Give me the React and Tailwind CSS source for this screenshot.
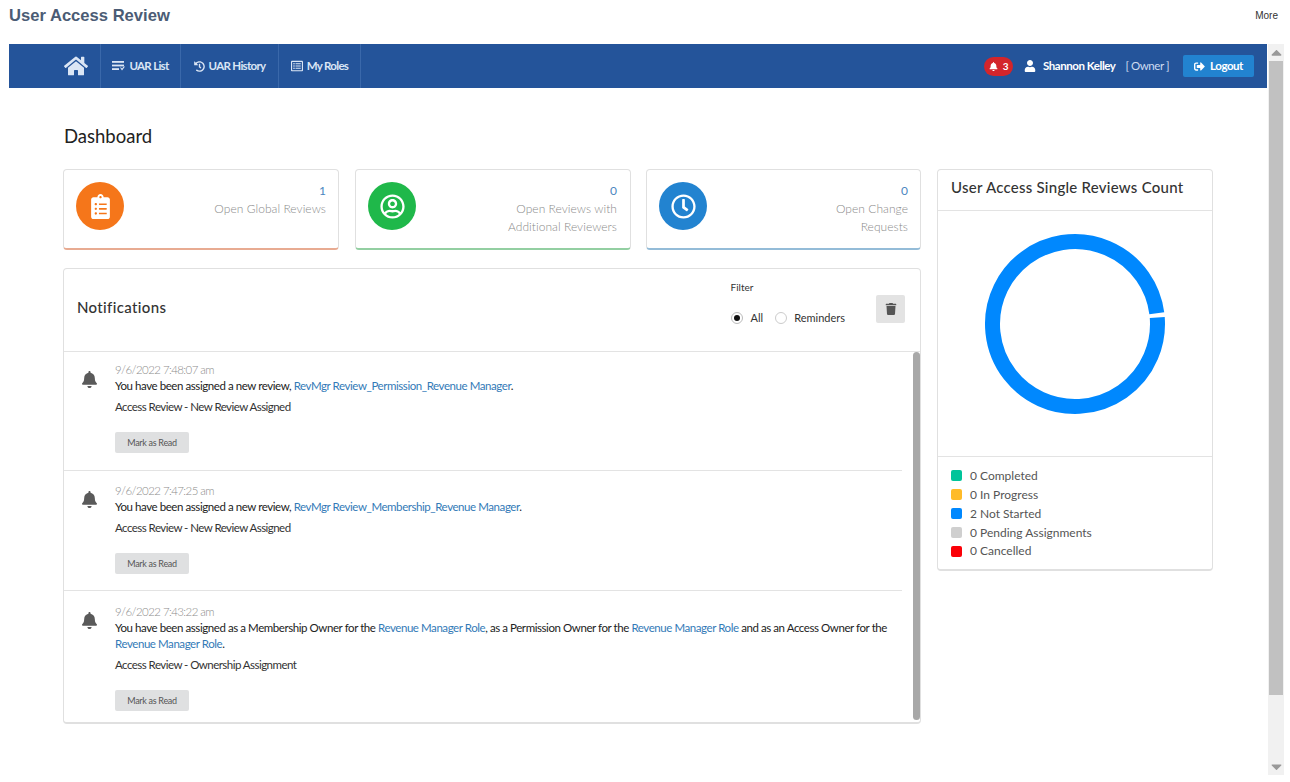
import { FaHome, FaHistory, FaRegListAlt, FaBell, FaUser, FaSignOutAlt, FaClipboardList, FaRegUserCircle, FaRegClock, FaTrash, FaCaretUp, FaCaretDown } from 'react-icons/fa';

const STATS = [
  { value: '1', lines: ['Open Global Reviews'], color: 'bg-[#f5761a]', border: 'border-b-[#e8ab92]', box: 'w-[276px] pr-[12px]', icon: <FaClipboardList className="text-[25px] text-white" /> },
  { value: '0', lines: ['Open Reviews with', 'Additional Reviewers'], color: 'bg-[#1fb84a]', border: 'border-b-[#93cfa2]', box: 'ml-[16px] w-[276px] pr-[13px]', icon: <FaRegUserCircle className="text-[25px] text-white" /> },
  { value: '0', lines: ['Open Change', 'Requests'], color: 'bg-[#2283d0]', border: 'border-b-[#94bcd8]', box: 'ml-[15px] w-[275px] pr-[12px]', icon: <FaRegClock className="text-[25px] text-white" /> },
];

const LEGEND = [
  { label: '0 Completed', color: 'bg-[#00c49a]', row: 'h-[19px]' },
  { label: '0 In Progress', color: 'bg-[#ffbb28]', row: 'h-[19px]' },
  { label: '2 Not Started', color: 'bg-[#0088fe]', row: 'h-[19px]' },
  { label: '0 Pending Assignments', color: 'bg-[#cfcfcf]', row: 'h-[19px]' },
  { label: '0 Cancelled', color: 'bg-[#fb0007]', row: 'h-[18px]' },
];

const Link = ({ children }) => <span className="text-[#337ab7]">{children}</span>;

const NOTES = [
  {
    time: '9/6/2022 7:48:07 am',
    body: <>You have been assigned a new review, <Link>RevMgr Review_Permission_Revenue Manager</Link>.</>,
    kind: 'Access Review - New Review Assigned',
    className: 'h-[118px]',
    bell: 'pt-[19px]',
    top: 'pt-[10px]',
    timeRow: 'leading-[16px]',
  },
  {
    time: '9/6/2022 7:47:25 am',
    body: <>You have been assigned a new review, <Link>RevMgr Review_Membership_Revenue Manager</Link>.</>,
    kind: 'Access Review - New Review Assigned',
    className: 'h-[120px] border-t border-[#e3e3e3]',
    bell: 'pt-[20px]',
    top: 'pt-[11px]',
    timeRow: 'leading-[17px]',
  },
  {
    time: '9/6/2022 7:43:22 am',
    body: <>You have been assigned as a Membership Owner for the <Link>Revenue Manager Role</Link>, as a Permission Owner for the <Link>Revenue Manager Role</Link> and as an Access Owner for the <Link>Revenue Manager Role</Link>.</>,
    kind: 'Access Review - Ownership Assignment',
    className: 'h-[133px] border-t border-[#e3e3e3]',
    bell: 'pt-[21px]',
    top: 'pt-[12px]',
    timeRow: 'leading-[17px]',
  },
];

const ListCheck = () => (
  <svg width="13" height="10" viewBox="0 0 13 10" fill="currentColor">
    <rect x="0" y="0" width="12" height="1.8" />
    <rect x="0" y="3.6" width="12" height="1.8" />
    <rect x="0" y="7.2" width="7" height="1.8" />
    <path d="M8 6.5 L10 9.5 L13 5.5 L11.8 5.5 L10 7.6 L9 6.5 Z" />
  </svg>
);

const NavItem = ({ icon, label, className }) => (
  <div className={`flex h-full items-center justify-center gap-[4px] border-r border-[#3a68aa] ${className}`}>
    {icon}
    <span>{label}</span>
  </div>
);

const Donut = () => {
  // ring with a small gap just above three o'clock
  const cx = 100, cy = 100, r = 82.5;
  const a0 = (-4.5 * Math.PI) / 180;
  const a1 = (-7.5 * Math.PI) / 180;
  const d = `M ${cx + r * Math.cos(a0)} ${cy + r * Math.sin(a0)} A ${r} ${r} 0 1 1 ${cx + r * Math.cos(a1)} ${cy + r * Math.sin(a1)}`;
  return (
    <svg width="200" height="200" viewBox="0 0 200 200">
      <path d={d} fill="none" stroke="#0088fe" strokeWidth="15" />
    </svg>
  );
};

const Notification = ({ note }) => (
  <div className={`flex ${note.className}`}>
    <div className={`w-[51px] shrink-0 pl-[17px] ${note.bell}`}>
      <FaBell className="text-[17px] text-[#5a5a5a]" />
    </div>
    <div className={`pr-[14px] ${note.top}`}>
      <div className={`text-[11.5px] font-light tracking-[-0.58px] text-[#8c8c8c] ${note.timeRow}`}>{note.time}</div>
      <div className="text-[11.5px] leading-[16px] tracking-[-0.43px] text-[#222]">{note.body}</div>
      <div className="mt-[5px] text-[11.5px] leading-[16px] tracking-[-0.54px] text-[#333]">{note.kind}</div>
      <div className="mt-[17px] flex h-[21px] w-[74px] items-center justify-center rounded-[2px] bg-[#dfe0e1] text-[9px] tracking-[-0.3px] text-[#555]">Mark as Read</div>
    </div>
  </div>
);

export default function App() {
  return (
    <div className="h-[782px] w-[1290px] overflow-hidden bg-white font-['Lato',sans-serif]">
      <div className="flex h-[44px] justify-between pl-[9px] pr-[12px] pt-[6px] font-['Liberation_Sans',sans-serif]">
        <div className="text-[16.6px] leading-[19px] font-bold text-[#4b5c75]">User Access Review</div>
        <div className="pt-[3px] text-[10px] leading-[14px] text-[#333]">More</div>
      </div>

      <div className="ml-[9px] flex">
        <div className="w-[1258px]">
          <div className="flex h-[44px] items-center justify-between bg-[#24549a] pl-[55px] pr-[13px] text-[11.5px] font-bold tracking-[-0.7px] text-[#dbe6f5]">
            <div className="flex h-full items-center">
              <NavItem className="w-[37px] justify-start" icon={<FaHome className="text-[24px]" />} />
              <NavItem className="w-[80px]" icon={<ListCheck />} label="UAR List" />
              <NavItem className="w-[98px]" icon={<FaHistory className="text-[11px]" />} label="UAR History" />
              <NavItem className="w-[82px]" icon={<FaRegListAlt className="text-[12px]" />} label="My Roles" />
            </div>
            <div className="flex items-center tracking-[-0.45px]">
              <div className="flex h-[19px] w-[29px] items-center justify-center gap-[5px] rounded-full bg-[#d3252b] text-[10px] text-white">
                <FaBell className="text-[9px]" />
                <span>3</span>
              </div>
              <FaUser className="ml-[11px] text-[12px] text-white" />
              <span className="ml-[7px] text-white">Shannon Kelley</span>
              <span className="ml-[10px] font-normal text-[#cfdcf0]">[ Owner ]</span>
              <div className="ml-[14px] flex h-[22px] w-[71px] items-center justify-center gap-[5px] rounded-[2px] bg-[#2283d0] text-white">
                <FaSignOutAlt className="text-[11px]" />
                <span>Logout</span>
              </div>
            </div>
          </div>

          <div className="pl-[54px] pr-[54px]">
            <h1 className="pl-[1px] pt-[36px] pb-[1px] text-[18.5px] leading-[24px] font-normal text-[#222]">Dashboard</h1>
            <div className="mt-[20px] flex gap-[16px]">
              <div className="w-[858px]">
                <div className="flex">
                  {STATS.map((s) => (
                    <div key={s.lines[0]} className={`flex h-[81px] items-start justify-between rounded-[4px] border border-[#e0e0e0] border-b-2 ${s.box} ${s.border} pl-[12px] pt-[12px]`}>
                      <div className={`flex h-[48px] w-[48px] items-center justify-center rounded-full ${s.color}`}>
                        {s.icon}
                      </div>
                      <div className="text-right text-[12px] leading-[18px] tracking-[0.05px] font-light text-[#8a8a8a]">
                        <div className="font-normal text-[#4a86c0]">{s.value}</div>
                        {s.lines.map((l) => <div key={l}>{l}</div>)}
                      </div>
                    </div>
                  ))}
                </div>

                <div className="mt-[18px] h-[456px] rounded-[4px] border border-[#e0e0e0] border-b-2">
                  <div className="flex h-[83px] border-b border-[#e3e3e3]">
                    <div className="pl-[13px] pt-[29px] text-[15px] leading-[18px] font-medium tracking-[0.35px] text-[#333]">Notifications</div>
                    <div className="ml-auto pt-[12px] text-[#333]">
                      <div className="text-[10px] leading-[12px]">Filter</div>
                      <div className="mt-[18px] flex items-center text-[11px] leading-[14px]">
                        <span className="flex h-[12px] w-[12px] items-center justify-center rounded-full border border-[#bbb]">
                          <span className="h-[6px] w-[6px] rounded-full bg-[#111]" />
                        </span>
                        <span className="ml-[8px]">All</span>
                        <span className="ml-[12px] h-[12px] w-[12px] rounded-full border border-[#ccc]" />
                        <span className="ml-[7px]">Reminders</span>
                      </div>
                    </div>
                    <div className="ml-[31px] mr-[15px] mt-[26px] flex h-[28px] w-[29px] items-center justify-center rounded-[2px] bg-[#e3e3e3]">
                      <FaTrash className="text-[12px] text-[#555]" />
                    </div>
                  </div>
                  <div className="flex h-[370px]">
                    <div className="w-[838px] shrink-0">
                      {NOTES.map((n) => <Notification key={n.time} note={n} />)}
                    </div>
                    <div className="ml-[11px] h-[368px] w-[7px] rounded-[4px] bg-[#a8a8a8]" />
                  </div>
                </div>
              </div>

              <div className="h-[402px] w-[276px] rounded-[4px] border border-[#e0e0e0] border-b-2">
                <div className="flex h-[41px] items-center border-b border-[#e3e3e3] pb-[6px] pl-[13px] text-[15px] font-medium tracking-[0.25px] text-[#333]">User Access Single Reviews Count</div>
                <div className="flex h-[246px] items-center justify-center border-b border-[#e3e3e3] pb-[19px] pr-[1px]">
                  <Donut />
                </div>
                <div className="pl-[13px] pt-[9px]">
                  {LEGEND.map((l) => (
                    <div key={l.label} className={`flex items-center ${l.row}`}>
                      <span className={`h-[11px] w-[11px] rounded-[2px] ${l.color}`} />
                      <span className="ml-[8px] text-[12px] text-[#555]">{l.label}</span>
                    </div>
                  ))}
                </div>
              </div>
            </div>
          </div>
        </div>

        <div className="ml-[1px] flex h-[731px] w-[16px] flex-col items-center bg-[#f1f1f1] text-[#999]">
          <FaCaretUp className="h-[17px] text-[11px]" />
          <div className="h-[634px] w-[14px] bg-[#c1c1c1]" />
          <div className="flex-1" />
          <FaCaretDown className="h-[17px] text-[11px]" />
        </div>
      </div>
    </div>
  );
}
